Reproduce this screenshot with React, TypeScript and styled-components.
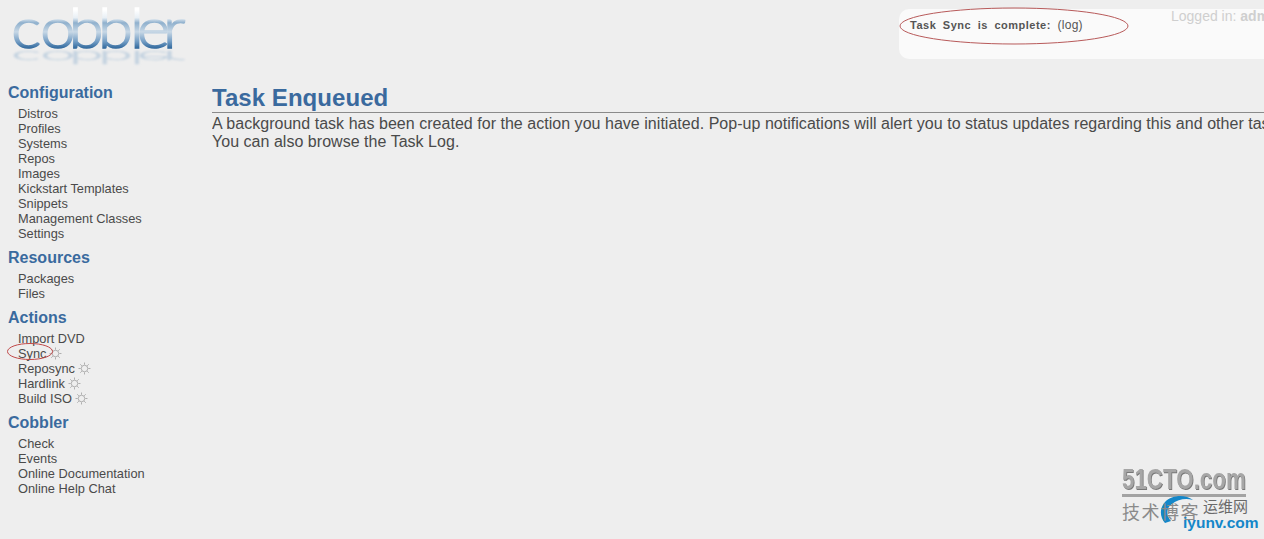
import React from "react";
import styled, { createGlobalStyle } from "styled-components";

const Global = createGlobalStyle`
  html, body { margin: 0; padding: 0; background: #eeeeee; height: 100%; overflow: hidden; }
  body { font-family: "Liberation Sans", Arial, sans-serif; color: #333; }
`;

const Page = styled.div`
  position: relative;
  width: 1264px;
  height: 539px;
  overflow: hidden;
  background: #eeeeee;
`;

const Header = styled.header`
  display: flex;
  justify-content: space-between;
  align-items: flex-start;
  height: 83px;
`;

const Logo = styled.svg`
  display: block;
  margin-left: 10px;
  width: 185px;
  height: 70px;
`;

const Panel = styled.div`
  box-sizing: border-box;
  position: relative;
  margin-top: 9px;
  width: 365px;
  height: 50px;
  background: #fafafa;
  border-radius: 10px 0 0 10px;
  display: flex;
  justify-content: space-between;
  align-items: flex-start;
  padding: 10px 0 0 11px;
`;

const Notice = styled.div`
  font-size: 11px;
  line-height: 13px;
  font-weight: bold;
  word-spacing: 3px;
  letter-spacing: 0.5px;
  color: #555;
  span { font-weight: normal; font-size: 12px; letter-spacing: 0.3px; }
`;

const Login = styled.div`
  margin-top: -11px;
  width: 93px;
  font-size: 14px;
  line-height: 16px;
  color: #cfcfcf;
  white-space: nowrap;
  b { font-weight: bold; }
`;

const NoticeRing = styled.svg`
  position: absolute;
  left: 0;
  top: -2px;
  width: 232px;
  height: 40px;
`;

const Body = styled.div`
  display: flex;
  align-items: flex-start;
`;

const Sidebar = styled.nav`
  flex: none;
  box-sizing: border-box;
  width: 212px;
  padding: 1px 0 0 8px;
`;

const Section = styled.section`
  margin-bottom: 8px;
`;

const SectionTitle = styled.h3`
  margin: 0 0 4px;
  font-size: 16px;
  line-height: 18px;
  font-weight: bold;
  color: #3a6a9e;
`;

const MenuList = styled.ul`
  list-style: none;
  margin: 0;
  padding: 0 0 0 10px;
`;

const MenuItem = styled.li`
  position: relative;
  display: flex;
  align-items: center;
  gap: 3px;
  height: 15px;
  font-size: 12.8px;
  line-height: 15px;
  color: #4a4a4a;
  white-space: nowrap;
`;

const SyncRing = styled.svg`
  position: absolute;
  left: -11px;
  top: -3px;
  width: 46px;
  height: 17px;
`;

const Main = styled.main`
  flex: 1;
  min-width: 0;
  overflow: hidden;
`;

const Title = styled.h1`
  margin: 0 0 2px;
  font-size: 24px;
  line-height: 29px;
  font-weight: bold;
  letter-spacing: 0.05px;
  color: #3a6a9e;
  border-bottom: 1px solid #8a8a8a;
`;

const Copy = styled.p`
  margin: 0;
  font-size: 16px;
  line-height: 18px;
  letter-spacing: 0.03px;
  color: #4a4a4a;
  white-space: nowrap;
`;

const Watermark = styled.div`
  position: absolute;
  right: 0;
  bottom: 0;
  width: 146px;
  height: 74px;
`;

const BrandLine = styled.div`
  position: absolute;
  left: 4px;
  top: -2px;
  font-size: 30px;
  line-height: 32px;
  font-weight: bold;
  color: #a6a6a6;
  text-shadow: 1px 1px 0 #777;
  transform: scaleX(0.745);
  transform-origin: left top;
  white-space: nowrap;
`;

const BrandRule = styled.div`
  position: absolute;
  left: 4px;
  top: 29px;
  width: 124px;
  height: 3px;
  background: #a3a3a3;
`;

const BlogLine = styled.div`
  position: absolute;
  left: 4px;
  top: 35px;
  font-family: "Noto Sans CJK SC", sans-serif;
  font-size: 18px;
  line-height: 22px;
  letter-spacing: 1.5px;
  color: #8a8a8a;
  white-space: nowrap;
`;

const NetLine = styled.div`
  position: absolute;
  left: 85px;
  top: 32px;
  font-family: "Noto Sans CJK SC", sans-serif;
  font-size: 15px;
  line-height: 18px;
  color: #6a6a6a;
  white-space: nowrap;
`;

const SiteLine = styled.div`
  position: absolute;
  left: 65px;
  top: 49px;
  font-size: 15.5px;
  line-height: 18px;
  font-weight: bold;
  color: #1487c9;
  white-space: nowrap;
`;

const Arc = styled.svg`
  position: absolute;
  left: 41px;
  top: 29px;
  width: 36px;
  height: 32px;
`;

const Gear = () => (
  <svg width="13" height="13" viewBox="0 0 24 24" fill="none" stroke="#a0a0a0" strokeWidth="1.5">
    <circle cx="12" cy="12" r="6" />
    <path d="M12 1v4M12 19v4M1 12h4M19 12h4M4.2 4.2l2.9 2.9M16.9 16.9l2.9 2.9M4.2 19.8l2.9-2.9M16.9 7.1l2.9-2.9" />
  </svg>
);

const sections = [
  { title: "Configuration", items: ["Distros", "Profiles", "Systems", "Repos", "Images", "Kickstart Templates", "Snippets", "Management Classes", "Settings"] },
  { title: "Resources", items: ["Packages", "Files"] },
  { title: "Actions", items: ["Import DVD", "Sync", "Reposync", "Hardlink", "Build ISO"] },
  { title: "Cobbler", items: ["Check", "Events", "Online Documentation", "Online Help Chat"] },
];

const withGear = ["Sync", "Reposync", "Hardlink", "Build ISO"];
const logoX = "1 26.7 52.1 77.8 106.1 112.5 135.3";

export default function App() {
  return (
    <Page>
      <Global />
      <Header>
        <Logo viewBox="0 0 185 70">
          <defs>
            <linearGradient id="logoFill" gradientUnits="userSpaceOnUse" x1="0" y1="10" x2="0" y2="49">
              <stop offset="0" stopColor="#ffffff" />
              <stop offset="0.2" stopColor="#e8eff5" />
              <stop offset="0.33" stopColor="#8fb0cd" />
              <stop offset="0.56" stopColor="#c8d8e6" />
              <stop offset="0.82" stopColor="#6f9ac2" />
              <stop offset="1" stopColor="#2a6398" />
            </linearGradient>
            <filter id="logoBlur" x="-5%" y="-30%" width="110%" height="160%">
              <feGaussianBlur stdDeviation="0.8" />
            </filter>
          </defs>
          <text x={logoX} y="48" transform="scale(1.13 1)" fontFamily="Lato, 'Liberation Sans', sans-serif" fontSize="56" fontWeight="300" fill="url(#logoFill)" stroke="url(#logoFill)" strokeWidth="1.5">cobbler</text>
          <g filter="url(#logoBlur)">
            <text x={logoX} y="0" transform="translate(0 51) scale(1.13 -0.33)" fontFamily="Lato, 'Liberation Sans', sans-serif" fontSize="56" fontWeight="300" fill="#c6d4e1" stroke="#c6d4e1" strokeWidth="1">cobbler</text>
          </g>
        </Logo>
        <Panel>
          <Notice>
            Task Sync is complete: <span>(log)</span>
          </Notice>
          <Login>
            Logged in: <b>admin</b>
          </Login>
          <NoticeRing viewBox="0 0 232 40">
            <ellipse cx="115" cy="19" rx="114" ry="18" fill="none" stroke="#b85a5a" strokeWidth="1" />
          </NoticeRing>
        </Panel>
      </Header>
      <Body>
        <Sidebar>
          {sections.map((s) => (
            <Section key={s.title}>
              <SectionTitle>{s.title}</SectionTitle>
              <MenuList>
                {s.items.map((item) => (
                  <MenuItem key={item}>
                    {item}
                    {withGear.includes(item) && <Gear />}
                    {item === "Sync" && (
                      <SyncRing viewBox="0 0 46 17">
                        <ellipse cx="23" cy="8.5" rx="22.5" ry="8" fill="none" stroke="#c04848" strokeWidth="1" />
                      </SyncRing>
                    )}
                  </MenuItem>
                ))}
              </MenuList>
            </Section>
          ))}
        </Sidebar>
        <Main>
          <Title>Task Enqueued</Title>
          <Copy>A background task has been created for the action you have initiated. Pop-up notifications will alert you to status updates regarding this and other tasks.</Copy>
          <Copy>You can also browse the Task Log.</Copy>
        </Main>
      </Body>
      <Watermark>
        <BrandLine>51CTO.com</BrandLine>
        <BrandRule />
        <Arc viewBox="0 0 36 32">
          <path d="M34 6 C26 0 13 1 6 8 C0 15 1 23 6 29 L12 27 C7 21 7 14 13 10 C19 5 27 4 34 6 Z" fill="#1487c9" />
        </Arc>
        <BlogLine>技术博客</BlogLine>
        <NetLine>运维网</NetLine>
        <SiteLine>iyunv.com</SiteLine>
      </Watermark>
    </Page>
  );
}
